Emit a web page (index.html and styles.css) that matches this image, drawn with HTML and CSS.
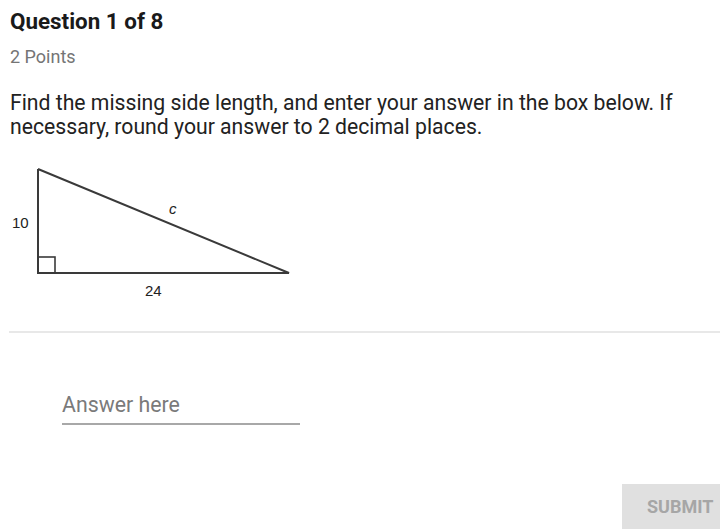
FILE: index.html
```html
<!DOCTYPE html>
<html lang="en">

<head>
    <meta charset="utf-8">
    <title>Question 1 of 8</title>
    <link rel="stylesheet" href="styles.css">
</head>

<body>
    <!-- question header -->
    <header class="question-header">
        <h1 class="question-header__title">Question 1 of 8</h1>
        <div class="question-header__points">2 Points</div>
    </header>

    <!-- question body -->
    <section class="question-body">
        <p class="question-body__text">Find the missing side length, and enter your answer in the box below. If necessary, round your answer to 2 decimal places.</p>
        <svg class="question-body__figure" width="300" height="146" viewBox="0 0 300 146">
            <polyline points="38,14 38,118 289,118 38,14" fill="none" stroke="#3a3a3a" stroke-width="2" stroke-linejoin="miter"/>
            <rect x="38" y="102" width="17" height="16" fill="none" stroke="#3a3a3a" stroke-width="1.6"/>
            <text x="12" y="73" class="figure-label">10</text>
            <text x="169" y="59" class="figure-label figure-label--italic">c</text>
            <text x="145" y="141" class="figure-label">24</text>
        </svg>
    </section>

    <hr class="divider">

    <!-- answer -->
    <div class="answer">
        <input class="answer__input" placeholder="Answer here">
    </div>

    <div class="actions">
        <button class="actions__submit" disabled>SUBMIT</button>
    </div>
</body>

</html>
```

FILE: styles.css
```css
/* ============ */
/* Main Content */
/* ============ */
* {
    box-sizing: border-box;
}
body {
    margin: 0;
    font-family: Roboto, 'Noto Sans', sans-serif;
    color: #222222;
    background-color: #ffffff;
    overflow: hidden;
}

.question-header {
    padding: 7px 10px 0;
}

.question-header__title {
    margin: 0;
    font-size: 22.4px;
    font-weight: bold;
    line-height: 28px;
    color: #1a1a1a;
}

.question-header__points {
    margin-top: 12px;
    font-size: 18px;
    line-height: 20px;
    color: #757575;
}

.question-body {
    padding: 0 10px;
}

.question-body__text {
    margin: 24px 0 0;
    font-size: 21.2px;
    line-height: 24px;
    color: #222222;
}

.question-body__figure {
    display: block;
    margin-top: 16px;
    margin-left: -10px;
}

.figure-label {
    font-family: 'Liberation Sans', Arial, sans-serif;
    font-size: 15px;
    fill: #222222;
}

.figure-label--italic {
    font-style: italic;
}

.divider {
    margin: 30px 0 0 9px;
    border: none;
    border-top: solid 2px #e8e8e8;
}

.answer {
    padding: 55px 0 0 62px;
}

.answer__input {
    display: block;
    width: 238px;
    padding: 4px 0 6px;
    border: none;
    border-bottom: solid 2px #a8a8a8;
    font-family: Roboto, 'Noto Sans', sans-serif;
    font-size: 21.3px;
    color: #222222;
    outline: none;
    background: transparent;
}

.answer__input::placeholder {
    color: #7a7a7a;
}

.actions {
    display: flex;
    justify-content: flex-end;
    margin-top: 59px;
}

.actions__submit {
    width: 98px;
    height: 45px;
    padding: 0 0 0 25px;
    border: none;
    background-color: #e0e0e0;
    font-family: Roboto, 'Noto Sans', sans-serif;
    font-size: 18px;
    font-weight: bold;
    color: #a6a6a6;
    text-align: left;
    white-space: nowrap;
}
```
